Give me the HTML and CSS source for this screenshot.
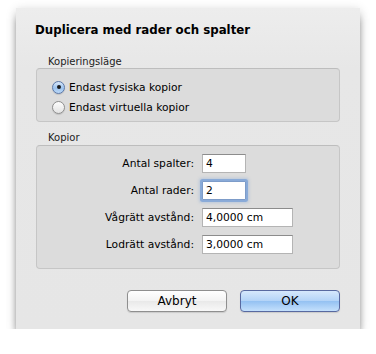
FILE: index.html
```html
<!DOCTYPE html>
<html lang="sv">
<head>
    <meta charset="UTF-8">
    <title>Duplicera med rader och spalter</title>
    <link rel="stylesheet" href="styles.css">
</head>
<body>
    <div class="dialog">
        <h1 class="title">Duplicera med rader och spalter</h1>

        <div class="group-label">Kopieringsläge</div>
        <div class="group-box modes">
            <label class="radio-row">
                <span class="radio checked"></span>
                Endast fysiska kopior
            </label>
            <label class="radio-row">
                <span class="radio"></span>
                Endast virtuella kopior
            </label>
        </div>

        <div class="group-label second">Kopior</div>
        <div class="group-box copies">
            <label for="cols">Antal spalter:</label>
            <input type="text" id="cols" class="short" value="4">

            <label for="rows">Antal rader:</label>
            <input type="text" id="rows" class="short focused" value="2">

            <label for="hgap">Vågrätt avstånd:</label>
            <input type="text" id="hgap" class="long" value="4,0000 cm">

            <label for="vgap">Lodrätt avstånd:</label>
            <input type="text" id="vgap" class="long" value="3,0000 cm">
        </div>

        <div class="buttons">
            <button class="btn">Avbryt</button>
            <button class="btn default">OK</button>
        </div>
    </div>
</body>
</html>
```

FILE: styles.css
```css
body {
    margin: 0;
    background: #fff;
    font-family: "DejaVu Sans", sans-serif;
    font-size: 10.7px;
    color: #000;
}
.dialog {
    width: 344px;
    height: 321px;
    margin: 8px 0 0 16px;
    padding: 0 20px;
    box-sizing: border-box;
    background: linear-gradient(#ededed, #e7e7e7 60px, #e6e6e6);
    box-shadow: 0 8px 8px -2px rgba(0, 0, 0, 0.55), 0 2px 10px rgba(0, 0, 0, 0.16);
}
.title {
    margin: 0;
    padding-top: 14px;
    font-size: 11.8px;
    line-height: 16px;
    font-weight: bold;
    margin-left: -1px;
}
.group-label {
    margin: 17px 0 0 12px;
    font-size: 10px;
    line-height: 13px;
    color: #222;
}
.group-label.second {
    margin-top: 9px;
}
.group-box {
    border: 1px solid #c6c6c6;
    border-top-color: #bdbdbd;
    border-radius: 4px;
    background: #dcdcdc;
    box-sizing: border-box;
}
.modes {
    height: 54px;
    padding: 8px 0 0 15px;
}
.radio-row {
    display: flex;
    align-items: center;
    gap: 4px;
    height: 20px;
}
.radio {
    width: 13px;
    height: 13px;
    border-radius: 50%;
    box-sizing: border-box;
    border: 1px solid #8e8e8e;
    background: linear-gradient(#fdfdfd, #e3e3e3);
    box-shadow: 0 1px 1px rgba(0, 0, 0, 0.12);
    display: flex;
    align-items: center;
    justify-content: center;
}
.radio.checked {
    border-color: #5b78a8;
    background: linear-gradient(#d9e8fb, #9cc3ee 55%, #bcd8f7);
}
.radio.checked::after {
    content: "";
    width: 4px;
    height: 4px;
    border-radius: 50%;
    background: #1a1a1a;
}
.copies {
    margin-top: 1px;
    height: 124px;
    padding: 8px 0 0 0;
    display: grid;
    grid-template-columns: 157px auto;
    column-gap: 8px;
    row-gap: 8px;
    align-items: center;
    align-content: start;
    justify-items: start;
}
.copies label {
    justify-self: end;
}
.copies input {
    height: 19px;
    box-sizing: border-box;
    border: 1px solid #b4b4b4;
    border-top-color: #8c8c8c;
    background: #fff;
    font-family: "DejaVu Sans", sans-serif;
    font-size: 10.7px;
    padding: 0 0 0 3px;
    margin: 0;
    outline: none;
}
.copies input.short {
    width: 44px;
}
.copies input.long {
    width: 91px;
}
.copies input.focused {
    border-color: #7d9cc9;
    border-radius: 1px;
    box-shadow: 0 0 0 2px rgba(120, 160, 215, 0.75), 0 0 3px 3px rgba(120, 160, 215, 0.35);
}
.buttons {
    display: flex;
    justify-content: flex-end;
    gap: 13px;
    margin-top: 21px;
}
.btn {
    width: 100px;
    height: 22px;
    border-radius: 4px;
    border: 1px solid #8f8f8f;
    background: linear-gradient(#ffffff, #f3f3f3 50%, #e9e9e9 51%, #f8f8f8);
    font-family: "DejaVu Sans", sans-serif;
    font-size: 12px;
    color: #000;
    padding: 0;
    box-shadow: 0 1px 1px rgba(0, 0, 0, 0.12);
}
.btn.default {
    border-color: #5869a0;
    background: linear-gradient(#d6e8fc, #b3d3f7 50%, #94c1f2 51%, #c4e0fc);
}
```
